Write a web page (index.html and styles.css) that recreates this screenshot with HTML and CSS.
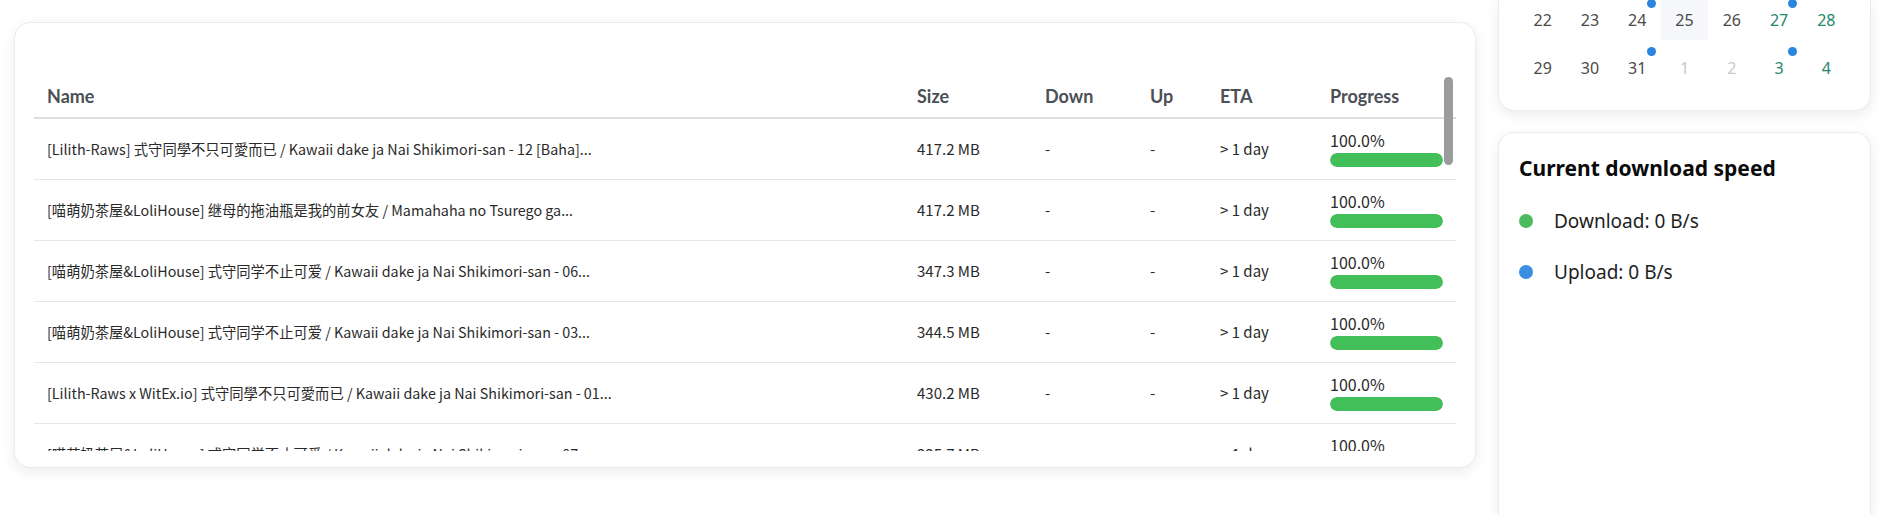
FILE: index.html
```html
<!DOCTYPE html>
<html lang="en">
<head>
<meta charset="utf-8">
<title>Torrents</title>
<link rel="stylesheet" href="styles.css">
</head>
<body>
<div class="page">
  <main class="main-col">
    <section class="card torrents">
      <div class="card-toolbar"></div>
      <div class="table-wrap">
        <table class="torrent-table">
          <colgroup>
            <col class="c-name"><col class="c-size"><col class="c-down"><col class="c-up"><col class="c-eta"><col class="c-prog">
          </colgroup>
          <thead>
            <tr><th>Name</th><th>Size</th><th>Down</th><th>Up</th><th>ETA</th><th>Progress</th></tr>
          </thead>
          <tbody>
            <tr>
              <td class="name">[Lilith-Raws] 式守同學不只可愛而已 / Kawaii dake ja Nai Shikimori-san - 12 [Baha]...</td>
              <td>417.2 MB</td><td>-</td><td>-</td><td>&gt; 1 day</td>
              <td><div class="prog"><span class="prog-text">100.0%</span><div class="bar"><div class="fill" style="width:100%"></div></div></div></td>
            </tr>
            <tr>
              <td class="name">[喵萌奶茶屋&amp;LoliHouse] 继母的拖油瓶是我的前女友 / Mamahaha no Tsurego ga...</td>
              <td>417.2 MB</td><td>-</td><td>-</td><td>&gt; 1 day</td>
              <td><div class="prog"><span class="prog-text">100.0%</span><div class="bar"><div class="fill" style="width:100%"></div></div></div></td>
            </tr>
            <tr>
              <td class="name">[喵萌奶茶屋&amp;LoliHouse] 式守同学不止可爱 / Kawaii dake ja Nai Shikimori-san - 06...</td>
              <td>347.3 MB</td><td>-</td><td>-</td><td>&gt; 1 day</td>
              <td><div class="prog"><span class="prog-text">100.0%</span><div class="bar"><div class="fill" style="width:100%"></div></div></div></td>
            </tr>
            <tr>
              <td class="name">[喵萌奶茶屋&amp;LoliHouse] 式守同学不止可爱 / Kawaii dake ja Nai Shikimori-san - 03...</td>
              <td>344.5 MB</td><td>-</td><td>-</td><td>&gt; 1 day</td>
              <td><div class="prog"><span class="prog-text">100.0%</span><div class="bar"><div class="fill" style="width:100%"></div></div></div></td>
            </tr>
            <tr>
              <td class="name">[Lilith-Raws x WitEx.io] 式守同學不只可愛而已 / Kawaii dake ja Nai Shikimori-san - 01...</td>
              <td>430.2 MB</td><td>-</td><td>-</td><td>&gt; 1 day</td>
              <td><div class="prog"><span class="prog-text">100.0%</span><div class="bar"><div class="fill" style="width:100%"></div></div></div></td>
            </tr>
            <tr>
              <td class="name">[喵萌奶茶屋&amp;LoliHouse] 式守同学不止可爱 / Kawaii dake ja Nai Shikimori-san - 07...</td>
              <td>335.7 MB</td><td>-</td><td>-</td><td>&gt; 1 day</td>
              <td><div class="prog"><span class="prog-text">100.0%</span><div class="bar"><div class="fill" style="width:100%"></div></div></div></td>
            </tr>
          </tbody>
        </table>
        <div class="scroll-thumb"></div>
      </div>
    </section>
  </main>
  <aside class="side-col">
    <section class="card calendar">
      <div class="cal-grid">
        <div class="day">22</div>
        <div class="day">23</div>
        <div class="day has-event">24</div>
        <div class="day today">25</div>
        <div class="day">26</div>
        <div class="day weekend has-event">27</div>
        <div class="day weekend">28</div>
        <div class="day">29</div>
        <div class="day">30</div>
        <div class="day has-event">31</div>
        <div class="day outside">1</div>
        <div class="day outside">2</div>
        <div class="day weekend has-event">3</div>
        <div class="day weekend">4</div>
      </div>
    </section>
    <section class="card speed">
      <h2 class="speed-title">Current download speed</h2>
      <ul class="legend">
        <li class="legend-item"><span class="dot dot-green"></span>Download: 0 B/s</li>
        <li class="legend-item"><span class="dot dot-blue"></span>Upload: 0 B/s</li>
      </ul>
    </section>
  </aside>
</div>
</body>
</html>
```

FILE: styles.css
```css
* { box-sizing: border-box; }

html, body {
  margin: 0;
  padding: 0;
  background: #ffffff;
  overflow: hidden;
}

body {
  font-family: "Noto Sans", "Noto Sans CJK SC", sans-serif;
  color: #222;
}

.page {
  display: grid;
  grid-template-columns: 1462px 373px;
  column-gap: 22px;
  padding-left: 14px;
  height: 515px;
}

.card {
  background: #fff;
  border: 1px solid #ececec;
  border-radius: 16px;
  box-shadow: 0 4px 14px rgba(0, 0, 0, 0.08);
}

/* ---------- torrents card ---------- */
.main-col {
  padding-top: 22px;
}

.torrents {
  height: 446px;
  padding: 19px 19px 16px;
}

.card-toolbar {
  height: 33px;
}

.table-wrap {
  position: relative;
  height: 376px;
  overflow: hidden;
}

.torrent-table {
  width: 1422px;
  table-layout: fixed;
  border-collapse: collapse;
}

.c-name { width: 870px; }
.c-size { width: 128px; }
.c-down { width: 105px; }
.c-up   { width: 70px; }
.c-eta  { width: 110px; }
.c-prog { width: 139px; }

.torrent-table th {
  height: 43px;
  padding: 0 13px;
  text-align: left;
  font-family: Lato, "Noto Sans", sans-serif;
  font-weight: 700;
  font-size: 18px;
  color: #4b4f56;
  border-bottom: 2px solid #dedede;
  vertical-align: middle;
}

.torrent-table td {
  height: 61px;
  padding: 0 13px;
  font-family: "Noto Sans CJK SC", "Noto Sans", sans-serif;
  font-size: 15px;
  line-height: 20px;
  color: #2a2a2a;
  border-bottom: 1px solid #e6e6e6;
  white-space: nowrap;
  overflow: hidden;
  vertical-align: middle;
}

.torrent-table td.name {
  font-size: 14.3px;
}

.prog {
  display: flex;
  flex-direction: column;
  gap: 3px;
  padding-top: 1px;
}

.prog-text {
  font-size: 16px;
  line-height: 19px;
  color: #2a2a2a;
}

.bar {
  height: 14px;
  border-radius: 7px;
  background: #e8e8e8;
  overflow: hidden;
}

.fill {
  height: 100%;
  background: #42bf59;
  border-radius: 7px;
}

.scroll-thumb {
  position: absolute;
  top: 2px;
  right: 3px;
  width: 9px;
  height: 88px;
  border-radius: 5px;
  background: #9b9b9b;
}

/* ---------- side column ---------- */
.side-col {
  display: flex;
  flex-direction: column;
  gap: 21px;
}

.calendar {
  border-top: none;
  border-radius: 0 0 16px 16px;
  padding: 0 20px 22px;
}

.cal-grid {
  display: grid;
  grid-template-columns: repeat(7, 1fr);
  grid-auto-rows: 40px;
  row-gap: 8px;
}

.day {
  position: relative;
  text-align: center;
  font-size: 16px;
  line-height: 40px;
  color: #4a4a4a;
}

.day.today { background: #f5f7fa; }
.day.weekend { color: #23876b; }
.day.outside { color: #c9c9c9; }

.day.has-event::after {
  content: "";
  position: absolute;
  top: -1px;
  left: 33px;
  width: 9px;
  height: 9px;
  border-radius: 50%;
  background: #2a85e0;
}

.speed {
  flex: 1;
  padding: 21px 20px;
  border-bottom: none;
  border-radius: 16px 16px 0 0;
}

.speed-title {
  margin: 0;
  font-size: 21px;
  font-weight: 700;
  line-height: 28px;
  color: #0a0a0a;
}

.legend {
  list-style: none;
  margin: 25px 0 0;
  padding: 0;
  display: flex;
  flex-direction: column;
  gap: 23px;
}

.legend-item {
  display: flex;
  align-items: center;
  gap: 21px;
  font-size: 19px;
  line-height: 28px;
  color: #1e1e1e;
}

.dot {
  width: 14px;
  height: 14px;
  border-radius: 50%;
  flex: none;
}

.dot-green { background: #4cbb5e; }
.dot-blue  { background: #3a8fe0; }
```
